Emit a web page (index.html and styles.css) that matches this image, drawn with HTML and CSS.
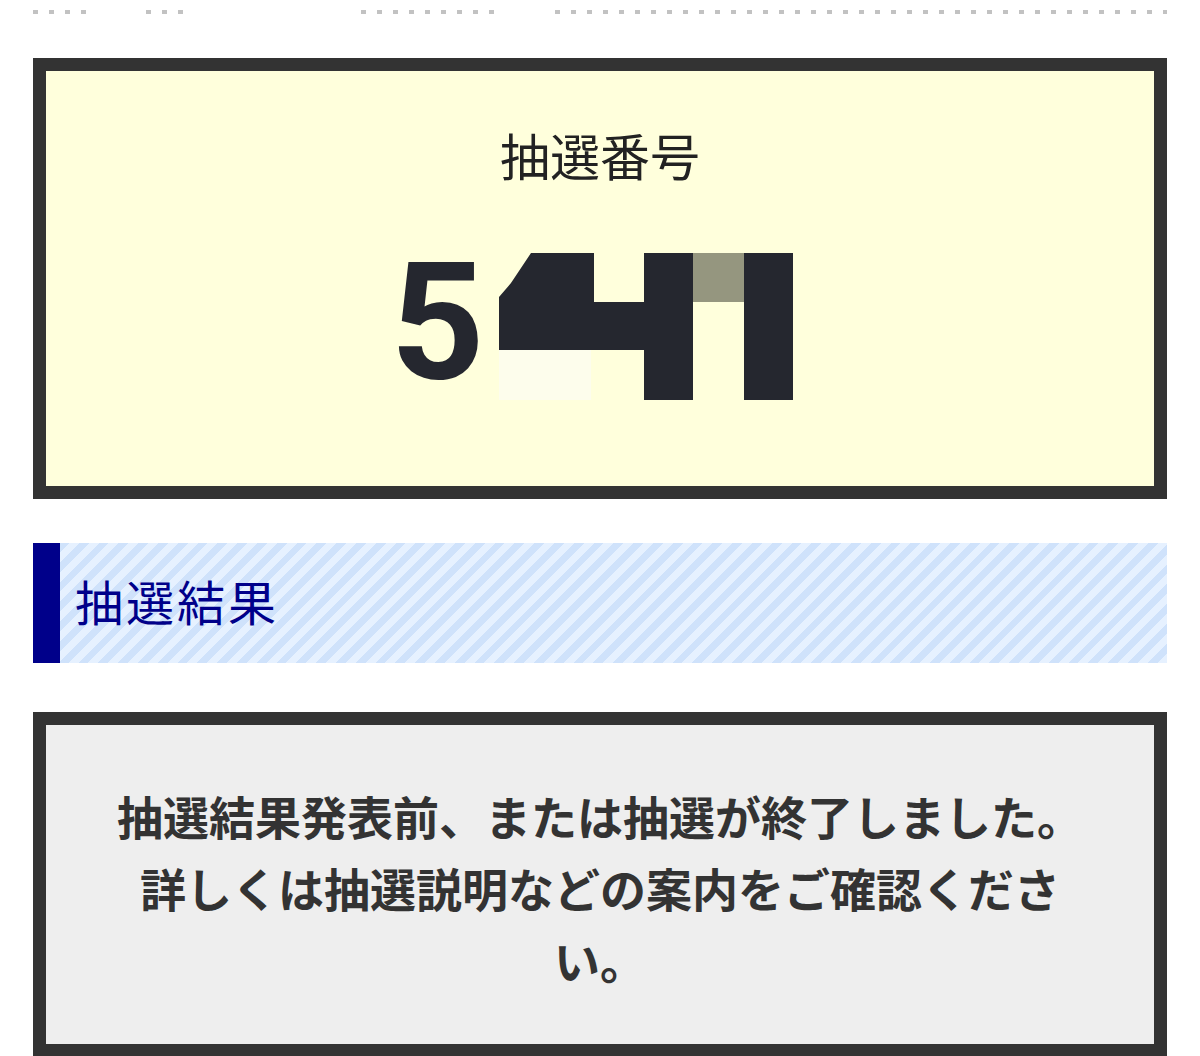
FILE: index.html
```html
<!DOCTYPE html>
<html lang="ja">
<head>
<meta charset="utf-8">
<title>抽選番号</title>
<link rel="stylesheet" href="styles.css">
</head>
<body>
<div class="page">
  <div class="dotline">
    <span class="seg seg1"></span>
    <span class="seg seg2"></span>
    <span class="seg seg3"></span>
    <span class="seg seg4"></span>
  </div>

  <section class="number-box">
    <h2 class="number-title">抽選番号</h2>
    <div class="number-row">
      <span class="digit">5</span>
      <svg class="redact" width="294" height="147" viewBox="0 0 294 147" aria-hidden="true">
        <rect x="0" y="97" width="92" height="50" fill="#fdfdec"/>
        <polygon points="32,0 95,0 95,49 145,49 145,0 194,0 194,147 145,147 145,97 0,97 0,44 12,30 32,0" fill="#25272f"/>
        <rect x="194" y="0" width="51" height="49" fill="#95967f"/>
        <rect x="245" y="0" width="49" height="147" fill="#25272f"/>
      </svg>
    </div>
  </section>

  <h2 class="section-head"><span class="section-text">抽選結果</span></h2>

  <section class="notice-box">
    <p class="notice-text">抽選結果発表前、または抽選が終了しました。詳しくは抽選説明などの案内をご確認ください。</p>
  </section>
</div>
</body>
</html>
```

FILE: styles.css
```css
* {
  box-sizing: border-box;
}

html, body {
  margin: 0;
  padding: 0;
  background: #ffffff;
}

body {
  font-family: "Liberation Sans", "Noto Sans CJK JP", sans-serif;
  color: #333333;
}

.page {
  padding: 0 33px;
}

.dotline {
  display: flex;
  height: 4px;
  margin-top: 10px;
}

.seg {
  display: block;
  height: 4px;
  background: repeating-linear-gradient(to right, #c2c2c2 0 5px, transparent 5px 16px);
}

.seg1 { width: 53px; }
.seg2 { width: 40px; margin-left: 60px; }
.seg3 { width: 144px; margin-left: 175px; }
.seg4 { flex: 1; margin-left: 50px; }

.number-box {
  margin-top: 44px;
  border: 13px solid #333333;
  background: #ffffdc;
  padding: 47px 0 81px;
  text-align: center;
}

.number-title {
  margin: 0;
  font-family: "Noto Sans CJK JP", sans-serif;
  font-weight: 400;
  font-size: 50px;
  line-height: 72px;
  color: #222222;
}

.number-row {
  margin-top: 50px;
  display: flex;
  justify-content: center;
  align-items: flex-start;
  height: 165px;
  padding-right: 17px;
}

.digit {
  font-family: Roboto, "Liberation Sans", Arial, sans-serif;
  font-weight: 700;
  font-size: 164px;
  line-height: 1;
  color: #25272f;
}

.redact {
  display: block;
  margin-top: 13px;
  margin-left: 14px;
}

.section-head {
  margin: 44px 0 0;
  height: 120px;
  display: flex;
  align-items: center;
  border-left: 27px solid #00008a;
  background: repeating-linear-gradient(-45deg, #e6f1ff 0 7px, #cfe2fb 7px 14px);
  padding-left: 15px;
  padding-bottom: 6px;
  font-family: "Noto Sans CJK JP", sans-serif;
  font-weight: 400;
  font-size: 48px;
  letter-spacing: 3px;
  color: #00008a;
}

.notice-box {
  margin-top: 49px;
  border: 13px solid #333333;
  background: #eeeeee;
  padding: 54px 60px 49px;
}

.notice-text {
  margin: 0;
  text-align: center;
  font-family: "Noto Sans CJK JP", sans-serif;
  font-weight: 700;
  font-size: 46px;
  line-height: 72px;
  color: #333333;
}
```
